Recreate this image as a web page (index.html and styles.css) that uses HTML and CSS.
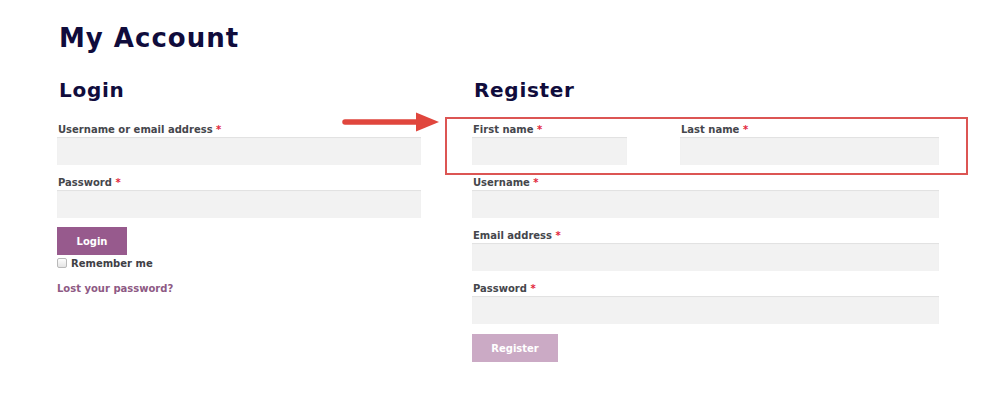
FILE: index.html
```html
<!DOCTYPE html>
<html lang="en">
<head>
<meta charset="utf-8">
<title>My Account</title>
<link rel="stylesheet" href="styles.css">
</head>
<body>
<main class="page">
  <h1 class="page-title">My Account</h1>
  <div class="columns">
    <section class="col col-login">
      <h2 class="col-title">Login</h2>
      <form class="form">
        <div class="field">
          <label class="label">Username or email address <span class="req">*</span></label>
          <input class="input" type="text">
        </div>
        <div class="field">
          <label class="label">Password <span class="req">*</span></label>
          <input class="input" type="password">
        </div>
        <button class="btn btn-login" type="button">Login</button>
        <label class="remember"><span class="checkbox"></span>Remember me</label>
        <a class="lost" href="#">Lost your password?</a>
      </form>
    </section>
    <section class="col col-register">
      <h2 class="col-title">Register</h2>
      <form class="form">
        <div class="name-row">
          <div class="field field-first">
            <label class="label">First name <span class="req">*</span></label>
            <input class="input" type="text">
          </div>
          <div class="field field-last">
            <label class="label">Last name <span class="req">*</span></label>
            <input class="input" type="text">
          </div>
          <div class="highlight"></div>
          <svg class="arrow" width="100" height="22" viewBox="0 0 100 22">
            <line x1="3" y1="11" x2="78" y2="11" stroke="#e0463d" stroke-width="5.5" stroke-linecap="round"/>
            <polygon points="74,1.5 97,11 74,20.5" fill="#e0463d"/>
          </svg>
        </div>
        <div class="field">
          <label class="label">Username <span class="req">*</span></label>
          <input class="input" type="text">
        </div>
        <div class="field">
          <label class="label">Email address <span class="req">*</span></label>
          <input class="input" type="email">
        </div>
        <div class="field">
          <label class="label">Password <span class="req">*</span></label>
          <input class="input" type="password">
        </div>
        <button class="btn btn-register" type="button">Register</button>
      </form>
    </section>
  </div>
</main>
</body>
</html>
```
FILE: styles.css
```css
* { box-sizing: border-box; }
html, body { margin: 0; padding: 0; background: #fff; }
body { font-family: "DejaVu Sans", "Open Sans", Arial, sans-serif; color: #43454b; }

.page { padding: 22px 0 0 57px; width: 1000px; }

.page-title {
  margin: 0 0 0 2px;
  font-size: 26px;
  line-height: 32px;
  font-weight: 700;
  color: #100c3c;
  letter-spacing: 1px;
}

.columns {
  display: grid;
  grid-template-columns: 364px 467px;
  column-gap: 51px;
  margin-top: 23px;
}

.col { position: relative; }

.col-title {
  margin: 0 0 0 2px;
  font-size: 20px;
  line-height: 26px;
  font-weight: 700;
  color: #100c3c;
  letter-spacing: 0.7px;
}

.form { display: flex; flex-direction: column; margin-top: 20px; }

.field { display: flex; flex-direction: column; margin-bottom: 11px; }

.label {
  font-size: 10px;
  line-height: 14px;
  font-weight: 700;
  color: #45464c;
  margin: 0 0 0 1px;
  height: 14px;
  white-space: nowrap;
}
.req { color: #e2263b; }

.input {
  height: 28px;
  border: 0;
  background: #f2f2f2;
  box-shadow: inset 0 1px 1px rgba(0,0,0,0.07);
  font: inherit;
  width: 100%;
}

.name-row { display: flex; justify-content: space-between; position: relative; }
.field-first { width: 155px; }
.field-last { width: 259px; }

.highlight {
  position: absolute;
  left: -27px;
  top: -6px;
  width: 523px;
  height: 58px;
  border: 2px solid #dc5553;
  pointer-events: none;
}

.arrow {
  position: absolute;
  left: -130px;
  top: -12px;
}

.btn {
  align-self: flex-start;
  border: 0;
  color: #fff;
  font-family: inherit;
  font-size: 10px;
  font-weight: 700;
  height: 28px;
  cursor: pointer;
  padding: 0;
}
.btn-login { width: 70px; background: #975a8d; margin-top: -2px; }
.btn-register { width: 86px; background: #cbaac5; margin-top: -1px; }

.remember {
  display: flex;
  align-items: center;
  font-size: 10px;
  font-weight: 700;
  color: #3f4046;
  margin-top: 1px;
  height: 14px;
}
.checkbox {
  width: 10px;
  height: 10px;
  border: 1px solid #b9b9b9;
  border-radius: 2px;
  background: linear-gradient(#fdfdfd, #e4e4e4);
  margin-right: 4px;
}

.lost {
  margin-top: 13px;
  font-size: 10px;
  font-weight: 700;
  color: #8e5a84;
  text-decoration: none;
}
```
